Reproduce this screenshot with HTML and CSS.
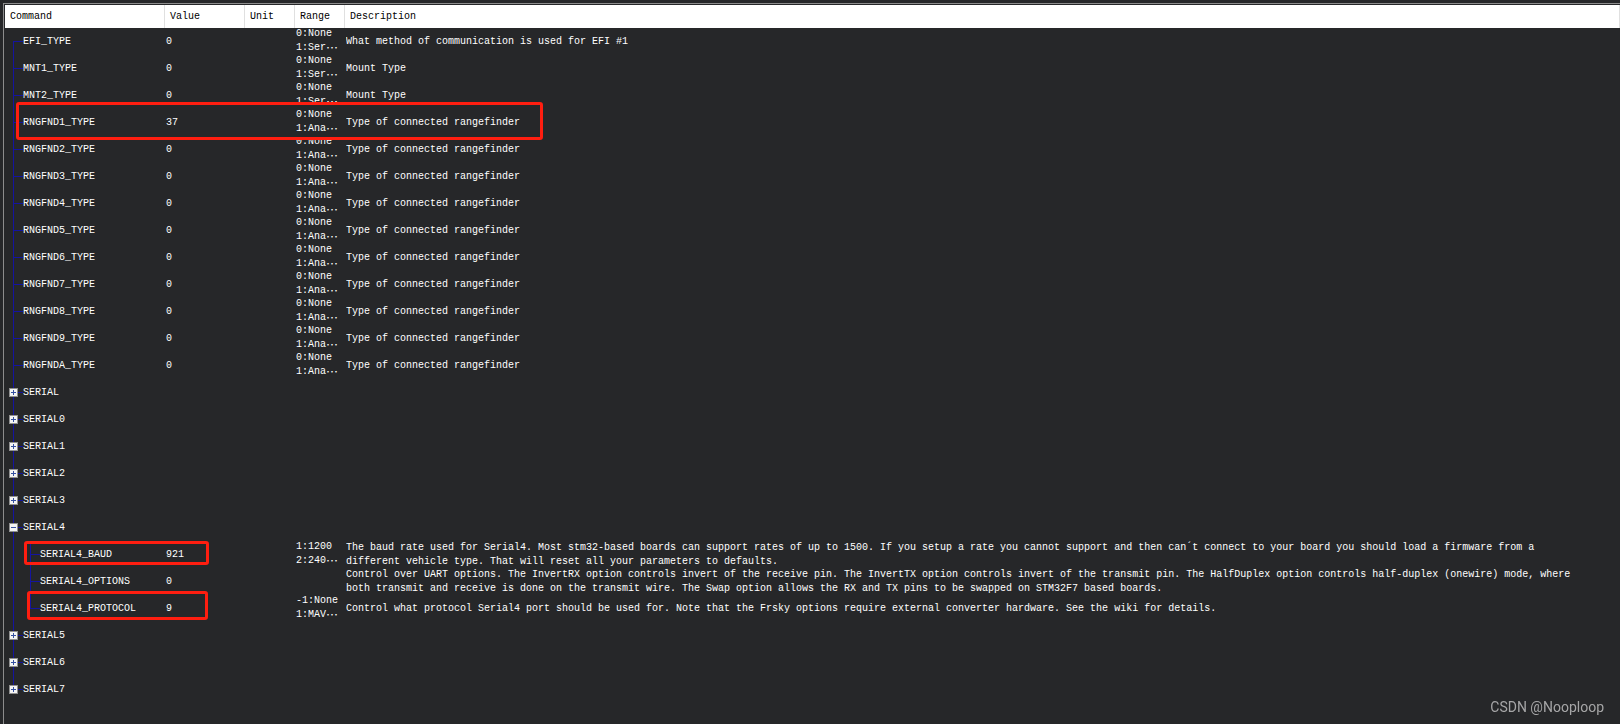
FILE: index.html
```html
<!DOCTYPE html>
<html lang="en">
<head>
<meta charset="utf-8">
<title>Parameter list</title>
<link rel="stylesheet" href="styles.css">
</head>
<body>
<main class="panel">
<table class="params">
<colgroup><col class="c-command"><col class="c-value"><col class="c-unit"><col class="c-range"><col></colgroup>
<thead><tr><th>Command</th><th>Value</th><th>Unit</th><th>Range</th><th>Description</th></tr></thead>
<tbody id="rows"></tbody>
</table>
</main>
<div class="watermark">CSDN @Nooploop</div>
<script src="app.js"></script>
</body>
</html>
```
FILE: styles.css
```css
* { box-sizing: border-box; }
body {
  margin: 0;
  min-height: 100vh;
  display: flex;
  background: #262729;
  color: #fff;
  font: 10px/14px "Liberation Mono", "Noto Sans CJK SC", monospace;
}
.panel {
  flex: 1;
  margin: 3px 0 0 3px;
  padding: 1px 0 0 1px;
  border: solid #8c8c8c;
  border-width: 1px 0 0 1px;
}
.params { width: 100%; table-layout: fixed; border-collapse: separate; border-spacing: 0; }
.c-command { width: 160px; }
.c-value { width: 80px; }
.c-unit { width: 50px; }
.c-range { width: 50px; }
th {
  height: 23px;
  padding: 1px 0 0 5px;
  background: #fff;
  color: #000;
  border-right: 1px solid #e0e0e0;
  font-weight: 400;
  text-align: left;
}
td { height: 27px; padding: 0 0 0 1px; vertical-align: middle; }
td:first-child { position: relative; padding-left: 4px; }
td:last-child { padding-right: 30px; }
.clip { height: 27px; overflow: hidden; display: flex; flex-direction: column; justify-content: center; }
.range { white-space: pre; padding-bottom: 1px; }
.range .line { height: 14px; flex: none; }
.dots { font: 12px/14px "Noto Sans CJK SC", sans-serif; vertical-align: top; }
.node { display: flex; align-items: center; height: 27px; white-space: nowrap; }
.guide {
  --line: #1414a0;
  flex: none;
  width: 14px;
  height: 27px;
  padding-top: 9px;
  background:
    linear-gradient(var(--line), var(--line)) 4px 0 / 1px 100% no-repeat,
    linear-gradient(var(--line), var(--line)) 4px 13px / 10px 1px no-repeat;
}
.guide.first { background-position: 4px 13px, 4px 13px; }
.guide.last { background-size: 1px 13px, 10px 1px; }
.guide.through { width: 17px; background-size: 1px 100%, 0 0; }
.toggle { display: block; width: 9px; height: 9px; padding: 0; border: 0; background: none; }
.toggle svg { display: block; }
.mark {
  position: absolute;
  z-index: 1;
  border: 3px solid #ff1e10;
  border-radius: 3px;
  pointer-events: none;
}
.mark.wide { left: 11px; top: -7px; width: 527px; height: 38px; }
.mark.baud { left: 19px; top: 0; width: 185px; height: 24px; }
.mark.protocol { left: 22px; top: -4px; width: 181px; height: 29px; }
.watermark {
  position: fixed;
  right: 16px;
  bottom: 9px;
  color: #a6a6a7;
  font: 14px/16px Roboto, Arial, sans-serif;
}
```
FILE: app.js
```js
const finder = "Type of connected rangefinder";
const rows = [
  { name: "EFI_TYPE", value: "0", range: ["0:None", "1:Ser…"], text: "What method of communication is used for EFI #1", edge: "first" },
  { name: "MNT1_TYPE", value: "0", range: ["0:None", "1:Ser…"], text: "Mount Type" },
  { name: "MNT2_TYPE", value: "0", range: ["0:None", "1:Ser…"], text: "Mount Type" },
  ...[..."123456789A"].map(n => ({
    name: `RNGFND${n}_TYPE`, value: n === "1" ? "37" : "0",
    range: ["0:None", "1:Ana…"], text: finder, mark: n === "1" ? "wide" : ""
  })),
  ...["", "0", "1", "2", "3"].map(n => ({ name: "SERIAL" + n, toggle: "+" })),
  { name: "SERIAL4", toggle: "-" },
  { name: "SERIAL4_BAUD", value: "921", range: ["1:1200", "2:240…"], child: true, mark: "baud",
    text: "The baud rate used for Serial4. Most stm32-based boards can support rates of up to 1500. If you setup a rate you cannot support and then can´t connect to your board you should load a firmware from a different vehicle type. That will reset all your parameters to defaults." },
  { name: "SERIAL4_OPTIONS", value: "0", child: true,
    text: "Control over UART options. The InvertRX option controls invert of the receive pin. The InvertTX option controls invert of the transmit pin. The HalfDuplex option controls half-duplex (onewire) mode, where both transmit and receive is done on the transmit wire. The Swap option allows the RX and TX pins to be swapped on STM32F7 based boards." },
  { name: "SERIAL4_PROTOCOL", value: "9", range: ["-1:None", "1:MAV…"], child: true, mark: "protocol", edge: "last",
    text: "Control what protocol Serial4 port should be used for. Note that the Frsky options require external converter hardware. See the wiki for details." },
  { name: "SERIAL5", toggle: "+" },
  { name: "SERIAL6", toggle: "+" },
  { name: "SERIAL7", toggle: "+", edge: "last" }
];

const toggle = (sign, name) => `<button class="toggle" type="button" aria-label="${sign === "+" ? "Expand" : "Collapse"} ${name}">
<svg width="9" height="9" shape-rendering="crispEdges"><path fill="#f4f4f4" stroke="#8f8f8f" d="M.5 .5h8v8h-8z"/><path stroke="#3450a0" d="M2 4.5h5${sign === "+" ? "M4.5 2v5" : ""}"/></svg></button>`;

document.getElementById("rows").innerHTML = rows.map(r => `<tr>
<td><div class="node">${r.child ? '<span class="guide through"></span>' : ""}<span class="guide ${r.edge || ""}">${r.toggle ? toggle(r.toggle, r.name) : ""}</span><span>${r.name}</span></div>${r.mark ? `<div class="mark ${r.mark}"></div>` : ""}</td>
<td>${r.value || ""}</td>
<td></td>
<td><div class="clip range">${(r.range || []).map(l => `<div class="line">${l.replace("…", '<span class="dots" lang="zh">…</span>')}</div>`).join("")}</div></td>
<td><div class="clip"><div>${r.text || ""}</div></div></td>
</tr>`).join("");
```
